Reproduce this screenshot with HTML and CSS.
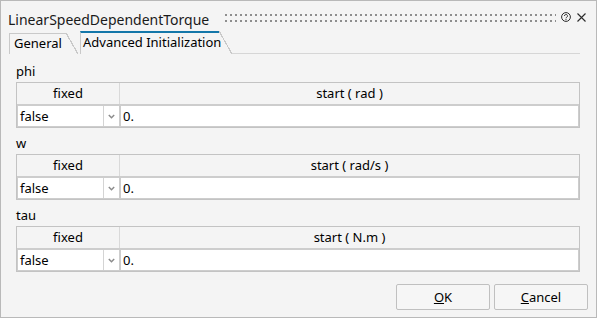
FILE: index.html
```html
<!DOCTYPE html>
<html>
<head>
<meta charset="utf-8">
<link rel="stylesheet" href="styles.css">
</head>
<body>
<div class="window">
  <div class="titlebar">
    <span class="title">LinearSpeedDependentTorque</span>
    <span class="grip"></span>
    <svg class="help" width="10" height="10" viewBox="0 0 10 10"><circle cx="5" cy="5" r="4.4" fill="none" stroke="#2b2b2b" stroke-width="1"/><path d="M3.5 4 a1.5 1.5 0 1 1 2.3 1.2 c-0.5 0.3 -0.8 0.5 -0.8 1.1" fill="none" stroke="#2b2b2b" stroke-width="0.95"/><circle cx="5" cy="7.6" r="0.6" fill="#2b2b2b"/></svg>
    <svg class="close" width="9" height="9" viewBox="0 0 9 9"><path d="M0.5 0.5 L8.5 8.5 M8.5 0.5 L0.5 8.5" stroke="#2b2b2b" stroke-width="1.1"/></svg>
  </div>
  <div class="tabbar">
    <div class="tab">General</div>
    <div class="tab active">Advanced Initialization</div>
    <div class="tabrest"></div>
  </div>
  <div class="content">
    <section class="param">
      <div class="plabel">phi</div>
      <div class="grid">
        <div class="hrow"><div class="hcell c1">fixed</div><div class="hcell c2">start ( rad )</div></div>
        <div class="drow">
          <div class="combo"><span class="cval">false</span><span class="carrow"><svg width="7" height="5" viewBox="0 0 7 5"><path d="M0.8 1 L3.5 3.7 L6.2 1" fill="none" stroke="#8c8c8c" stroke-width="1.5"/></svg></span></div>
          <div class="input">0.</div>
        </div>
      </div>
    </section>
    <section class="param">
      <div class="plabel">w</div>
      <div class="grid">
        <div class="hrow"><div class="hcell c1">fixed</div><div class="hcell c2">start ( rad/s )</div></div>
        <div class="drow">
          <div class="combo"><span class="cval">false</span><span class="carrow"><svg width="7" height="5" viewBox="0 0 7 5"><path d="M0.8 1 L3.5 3.7 L6.2 1" fill="none" stroke="#8c8c8c" stroke-width="1.5"/></svg></span></div>
          <div class="input">0.</div>
        </div>
      </div>
    </section>
    <section class="param">
      <div class="plabel">tau</div>
      <div class="grid">
        <div class="hrow"><div class="hcell c1">fixed</div><div class="hcell c2">start ( N.m )</div></div>
        <div class="drow">
          <div class="combo"><span class="cval">false</span><span class="carrow"><svg width="7" height="5" viewBox="0 0 7 5"><path d="M0.8 1 L3.5 3.7 L6.2 1" fill="none" stroke="#8c8c8c" stroke-width="1.5"/></svg></span></div>
          <div class="input">0.</div>
        </div>
      </div>
    </section>
  </div>
  <div class="footer">
    <button class="btn"><u>O</u>K</button>
    <button class="btn"><u>C</u>ancel</button>
  </div>
</div>
</body>
</html>
```
FILE: styles.css
```css
body {
  margin: 0;
  font-family: "Noto Sans", "Segoe UI", sans-serif;
  font-size: 13px;
  color: #000;
}
.window {
  width: 597px;
  height: 318px;
  box-sizing: border-box;
  border: 1px solid #b9b9b9;
  background: #f4f4f4;
  display: flex;
  flex-direction: column;
}
.titlebar {
  height: 30px;
  display: flex;
  align-items: flex-start;
  padding-left: 7px;
  padding-right: 10px;
}
.title {
  margin-top: 9px;
  line-height: 20px;
  font-size: 14px;
  color: #1a1a1a;
  white-space: nowrap;
}
.grip {
  flex: 1;
  height: 8px;
  margin-top: 13px;
  margin-left: 16px;
  background-image: conic-gradient(at 2px 2px, transparent 75%, #8e8e8e 0);
  background-size: 5px 6px;
}
.help {
  margin-top: 11px;
  margin-left: 5px;
}
.close {
  margin-top: 12px;
  margin-left: 6px;
}
.tabbar {
  height: 23px;
  display: flex;
  align-items: flex-end;
  padding-left: 8px;
  padding-right: 16px;
}
.tab {
  position: relative;
  box-sizing: border-box;
  border-left: 1px solid #c9c9c9;
  border-top: 1px solid #c9c9c9;
  line-height: 18px;
  white-space: nowrap;
  width: 57px;
  height: 21px;
  padding-left: 4px;
  margin-right: 14px;
}
.tab::after {
  content: "";
  position: absolute;
  left: 100%;
  top: -1px;
  width: 12px;
  height: 21px;
  background: linear-gradient(to top right, transparent calc(50% - 0.6px), #c9c9c9 calc(50% - 0.6px), #c9c9c9 calc(50% + 0.6px), transparent calc(50% + 0.6px));
}
.tab.active {
  width: 139px;
  height: 23px;
  border-top: 2px solid #1477a9;
  padding-left: 2px;
  margin-right: 13px;
}
.tab.active::after {
  top: -2px;
  width: 13px;
  height: 23px;
}
.tabrest {
  flex: 1;
  height: 1px;
  border-bottom: 1px solid #d6d6d6;
}
.content {
  padding: 6px 16px 0 15px;
}
.param {
  margin-bottom: 4px;
}
.param:last-child {
  margin-bottom: 0;
}
.plabel {
  line-height: 22px;
  height: 22px;
}
.grid {
  border: 1px solid #c3c3c3;
}
.hrow {
  display: flex;
  height: 22px;
  box-sizing: border-box;
  border-bottom: 1px solid #cdcdcd;
}
.hcell {
  line-height: 21px;
  text-align: center;
  white-space: nowrap;
}
.c1 {
  width: 103px;
  box-sizing: border-box;
  border-right: 1px solid #d9d9d9;
}
.c2 {
  flex: 1;
}
.drow {
  display: flex;
  height: 22px;
}
.combo {
  width: 103px;
  box-sizing: border-box;
  border: 1px solid #cdcdcd;
  background: #fff;
  display: flex;
}
.cval {
  flex: 1;
  padding-left: 2px;
  line-height: 20px;
}
.carrow {
  width: 16px;
  box-sizing: border-box;
  border-left: 1px solid #d4d4d4;
  display: flex;
  align-items: center;
  justify-content: center;
}
.input {
  flex: 1;
  box-sizing: border-box;
  border: 1px solid #cdcdcd;
  background: #fff;
  padding-left: 2px;
  line-height: 20px;
}
.footer {
  margin-top: 12px;
  display: flex;
  justify-content: flex-end;
  gap: 4px;
  padding-right: 8px;
}
.btn {
  width: 94px;
  height: 26px;
  box-sizing: border-box;
  border: 1px solid #c0c0c0;
  border-radius: 2px;
  background: #f6f6f6;
  font-family: inherit;
  font-size: 13px;
  color: #000;
  padding: 0;
}
```
